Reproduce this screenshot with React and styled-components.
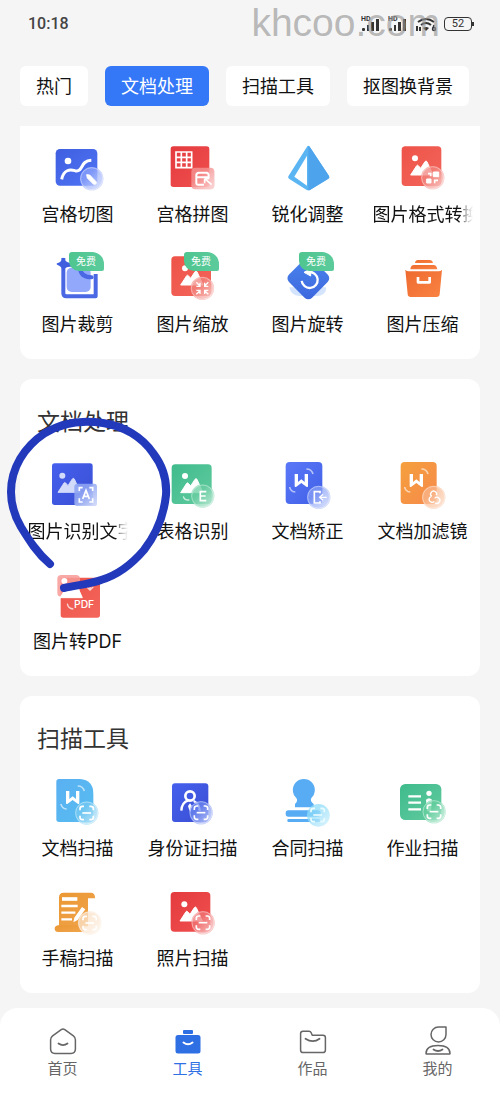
import React, { useState } from "react";
import styled, { createGlobalStyle } from "styled-components";

const GlobalStyle = createGlobalStyle`
  * {
    box-sizing: border-box;
  }
  body {
    margin: 0;
    background: #f5f5f5;
    font-family: Inter, "Noto Sans CJK SC", sans-serif;
    color: #111;
  }
  button {
    margin: 0;
    padding: 0;
    border: none;
    background: none;
    font: inherit;
    color: inherit;
    cursor: pointer;
  }
`;

const gradients = [
  ["blue", "#3f5fdf", "#4f74f6"],
  ["royal", "#4560ee", "#3a4ed2"],
  ["indigo", "#5b78f8", "#3f5fe6"],
  ["diamond", "#4a86ee", "#3d66dd"],
  ["red", "#e43a3e", "#f0504f"],
  ["coral", "#ee5348", "#f3665c"],
  ["sky", "#5ab0f2", "#57bdf0"],
  ["green", "#3fbb8c", "#62cb9f"],
  ["orange", "#f5a03c", "#f68a4c"],
  ["box", "#ee6a2e", "#f98343"],
  ["sepia", "#eb9733", "#f0a54c"],
];

function Gradients() {
  return (
    <HiddenSvg aria-hidden="true">
      <defs>
        {gradients.map(([id, from, to]) => (
          <linearGradient key={id} id={id} x1="0" y1="0" x2="1" y2="1">
            <stop offset="0" stopColor={from} />
            <stop offset="1" stopColor={to} />
          </linearGradient>
        ))}
        <linearGradient id="shine" x1="0" y1="0" x2="1" y2="1">
          <stop offset="0.35" stopColor="#fff" stopOpacity="0" />
          <stop offset="1" stopColor="#fff" stopOpacity="0.6" />
        </linearGradient>
      </defs>
    </HiddenSvg>
  );
}

function Photo({ x = 0, y = 0, color = "#fff" }) {
  return (
    <g transform={`translate(${x} ${y})`} fill={color}>
      <circle cx="16" cy="0" r="9" />
      <path
        d="M3 50 21 22q2-3 5 0l7 8 13-20q3-4 6 0l18 40z"
        stroke={color}
        strokeWidth="3"
        strokeLinejoin="round"
      />
    </g>
  );
}

function Lens({ cx, cy, color, children }) {
  return (
    <g>
      <circle cx={cx} cy={cy} r="35" fill={color} fillOpacity="0.75" />
      <circle cx={cx} cy={cy} r="35" fill="url(#shine)" />
      <circle cx={cx} cy={cy} r="33" fill="none" stroke="#fff" strokeOpacity="0.4" strokeWidth="3" />
      <g transform={`translate(${cx} ${cy})`} fill="none" stroke="#fff" strokeWidth="5">
        {children}
      </g>
    </g>
  );
}

function ScanMark() {
  return (
    <>
      <path d="M-20-8v-5q0-7 7-7h5M8-20h5q7 0 7 7v5M20 8v5q0 7-7 7H8M-8 20h-5q-7 0-7-7V8" />
      <path d="M-13 0h26" />
    </>
  );
}

function LetterMark({ x, y }) {
  return (
    <g transform={`translate(${x} ${y})`} fill="none" stroke="#fff">
      <path
        d="M-20-18h10V6L0-2 10 6v-24h10v36q0 5-5 2L0 9-15 20q-5 3-5-2z"
        fill="#fff"
        stroke="none"
      />
      <path d="M15-33q16 0 20 15" strokeWidth="5" opacity="0.6" />
      <path d="M-35 21q2 14 17 15" strokeWidth="5" opacity="0.6" />
    </g>
  );
}

const icons = {
  slice: (
    <>
      <rect x="5" y="15" width="125" height="110" rx="13" fill="url(#blue)" />
      <circle cx="42" cy="51" r="10" fill="#fff" />
      <path d="M23 106C29 76 48 76 63 80c26 6 14-30 49-31" fill="none" stroke="#fff" strokeWidth="9" />
      <Lens cx={113} cy={104} color="#8fa6fb">
        <path d="M-15-12-6-11 14 10 13 16 6 17-13-2z" fill="#fff" strokeWidth="3" strokeLinejoin="round" />
      </Lens>
    </>
  ),
  collage: (
    <>
      <rect x="5" y="7" width="116" height="122" rx="8" fill="url(#red)" />
      <path d="M21 24h47v47H21zM37 24v47M53 24v47M21 40h47M21 55h47" fill="none" stroke="#fff" strokeWidth="5" />
      <rect x="67" y="71" width="69" height="65" rx="12" fill="#f58f8f" fillOpacity="0.85" />
      <rect x="67" y="71" width="69" height="65" rx="12" fill="url(#shine)" />
      <path d="M82 100v-6q0-8 8-8h21q8 0 8 8v6zM82 98v20q0 4 4 4h19" fill="none" stroke="#fff" strokeWidth="6" />
      <path d="M107 104 128 122M107 104v14M107 104h14" fill="none" stroke="#fff" strokeWidth="5" />
    </>
  ),
  prism: (
    <>
      <path d="M69 8q4-5 8 0l58 88q3 5-2 8l-54 33q-6 4-12 0l-52-33q-4-3-2-7z" fill="#5cb5f3" />
      <path d="M73 6q3 0 4 2l58 88q3 5-2 8l-54 33q-3 2-6 2z" fill="#4da4ec" />
      <path d="M69 35v90L31 98z" fill="#fff" />
    </>
  ),
  convert: (
    <>
      <rect x="8" y="7" width="119" height="119" rx="11" fill="url(#coral)" />
      <Photo x={32} y={43} />
      <Lens cx={101} cy={101} color="#f2847e">
        <path d="M2-17h16V-3H2zM-18 4h13v12h-13z" fill="#fff" strokeWidth="3" />
        <path d="M-14-12h8v8M6 17V8h10" strokeWidth="5" />
      </Lens>
    </>
  ),
  crop: (
    <>
      <rect x="38" y="41" width="72" height="73" rx="15" fill="#92a8fb" />
      <path d="M28 12v106q0 9 9 9h88V60" fill="none" stroke="#4a68e4" strokeWidth="12" strokeLinejoin="round" />
      <path d="M78 42q2 28 35 28" fill="none" stroke="#4a68e4" strokeWidth="12" strokeLinecap="round" />
      <path
        d="M28 12q3 15 20 17h28v7H48Q31 37 28 48 25 35 10 30 25 26 28 12"
        fill="#3f5fdf"
        stroke="#3f5fdf"
        strokeWidth="4"
        strokeLinejoin="round"
      />
    </>
  ),
  scale: (
    <>
      <rect x="7" y="7" width="119" height="119" rx="11" fill="url(#coral)" />
      <Photo x={32} y={43} />
      <Lens cx={100} cy={103} color="#f2847e">
        <path
          d="M-18-18-7-7M-7-17v11h-11M18-18 7-7M7-17v11h11M-18 18-7 7M-7 17V6h-11M18 18 7 7M7 17V6h11"
          strokeWidth="4"
        />
      </Lens>
    </>
  ),
  rotate: (
    <>
      <path d="M16 100h110q2 12-8 20-8 6-18 6H46q-26-2-30-26" fill="#d3e4fc" />
      <rect x="24" y="24" width="98" height="98" rx="16" fill="url(#diamond)" transform="rotate(45 73 73)" />
      <path d="M53 78a24 24 0 1 0 24-24" fill="none" stroke="#fff" strokeWidth="7" transform="rotate(-6 77 78)" />
      <path d="M60 55 80 44v22z" fill="#fff" stroke="#fff" strokeWidth="3" strokeLinejoin="round" />
    </>
  ),
  compress: (
    <>
      <path d="M48 27q1-9 9-9h35q8 0 10 9z" fill="url(#box)" />
      <path d="M34 46q1-13 11-13h58q10 0 12 13z" fill="url(#box)" />
      <path d="M19 47q4 5 10 5h90q6 0 10-5l-7 74q-1 8-9 8H35q-8 0-9-8z" fill="url(#box)" />
      <path d="M57 69v16h35V69" fill="none" stroke="#fff" strokeWidth="8" strokeLinejoin="round" />
    </>
  ),
  ocr: (
    <>
      <rect x="-6" y="7" width="122" height="125" rx="8" fill="url(#royal)" />
      <Photo x={9} y={44} color="#d3dbfa" />
      <rect x="61" y="68" width="68" height="67" rx="9" fill="#8ea4f2" fillOpacity="0.9" />
      <rect x="61" y="68" width="68" height="67" rx="9" fill="url(#shine)" />
      <path d="M76 90V80h10M106 80h10v10M116 112v11h-10M86 123H76v-11" fill="none" stroke="#fff" strokeWidth="5" />
      <path d="m86 114 10-26 10 26M89 106h14" fill="none" stroke="#fff" strokeWidth="5" />
    </>
  ),
  table: (
    <>
      <rect x="8" y="10" width="120" height="119" rx="11" fill="url(#green)" />
      <Photo x={32} y={45} />
      <path d="M43 106q2 12 18 11" fill="none" stroke="#fff" strokeWidth="4" opacity="0.7" />
      <Lens cx={101} cy={105} color="#6acda2">
        <path d="M11-13H-7v27h18M-7 0h16" />
      </Lens>
    </>
  ),
  correct: (
    <>
      <rect x="5" y="3" width="110" height="126" rx="12" fill="url(#indigo)" />
      <LetterMark x={52} y={57} />
      <Lens cx={104} cy={109} color="#8aa2f7">
        <path d="M4-12v-5h-17v34H4v-5" />
        <path d="M24 0H3M13-9 3 0l10 9" strokeWidth="4" />
      </Lens>
    </>
  ),
  filter: (
    <>
      <rect x="5" y="3" width="108" height="126" rx="12" fill="url(#orange)" />
      <LetterMark x={52} y={57} />
      <Lens cx={104} cy={109} color="#f9b78b">
        <path d="M-6-3a9 9 0 1 1 14-3M2 12a9 9 0 1 1-8-15M3 3a9 9 0 1 1 1 13" strokeWidth="4" />
      </Lens>
    </>
  ),
  pdf: (
    <>
      <rect x="20" y="20" width="118" height="120" rx="8" fill="url(#coral)" />
      <rect x="10" y="12" width="68" height="65" rx="12" fill="#f79a96" fillOpacity="0.85" />
      <Photo x={15} y={30} />
      <path d="M108 36v20M98 47l10 10 10-10M40 98q2 15 18 16" fill="none" stroke="#fff" strokeWidth="4" opacity="0.75" />
      <text x="60" y="110" fill="#fff" fontSize="31" fontWeight="500" fontFamily="Inter, sans-serif">PDF</text>
    </>
  ),
  docScan: (
    <>
      <path d="M15 3h63q40 3 40 44v77q0 8-8 8H15q-8 0-8-8V11q0-8 8-8" fill="url(#sky)" />
      <LetterMark x={56} y={57} />
      <Lens cx={98} cy={105} color="#76caf2">
        <ScanMark />
      </Lens>
    </>
  ),
  idScan: (
    <>
      <rect x="9" y="16" width="109" height="116" rx="9" fill="url(#royal)" />
      <circle cx="63" cy="54" r="14" fill="none" stroke="#fff" strokeWidth="8" />
      <path d="M37 98q1-25 21-31M92 98q0-20-18-29" fill="none" stroke="#fff" strokeWidth="7" />
      <path d="m63 76 6 8-6 19-6-19z" fill="#fff" />
      <Lens cx={96} cy={104} color="#6f88f0">
        <ScanMark />
      </Lens>
    </>
  ),
  stamp: (
    <>
      <path d="M33 88V78q10-9 4-18a33 33 0 1 1 45 0q-5 9 7 18v10z" fill="#58acf4" />
      <rect x="5" y="97" width="105" height="19" rx="8" fill="#58acf4" />
      <rect x="10" y="123" width="98" height="9" rx="4" fill="#58acf4" />
      <circle cx="103" cy="112" r="34" fill="#8fdcf9" fillOpacity="0.75" />
      <circle cx="103" cy="112" r="34" fill="url(#shine)" />
      <g transform="translate(101 111)" fill="none" stroke="#e9fbff" strokeWidth="5">
        <ScanMark />
      </g>
    </>
  ),
  homework: (
    <>
      <rect x="3" y="18" width="124" height="108" rx="16" fill="url(#green)" />
      <path d="M28 55h38M28 74h38M28 94h38" stroke="#fff" strokeWidth="7" />
      <circle cx="90" cy="46" r="8" fill="#fff" />
      <path d="M81 65q9-9 18 0l-3 35H84z" fill="#fff" />
      <Lens cx={105} cy={101} color="#66cf9f">
        <ScanMark />
      </Lens>
    </>
  ),
  manuscript: (
    <>
      <path d="M29 14h83q12 2 11 17h-21v84H15V29q0-15 14-15" fill="url(#sepia)" />
      <path d="M12 112h78v20H12q-10-2-10-10t10-10" fill="url(#sepia)" />
      <path d="M24 33h46" stroke="#fff" strokeWidth="11" />
      <path d="M22 54h49M22 74h42M22 94h32" stroke="#fff" strokeWidth="7" />
      <path d="M58 103 61 89 84 57l10 7-23 32z" fill="#fff" />
      <Lens cx={107} cy={105} color="#fbe3cb">
        <ScanMark />
      </Lens>
    </>
  ),
  photoScan: (
    <>
      <rect x="5" y="12" width="119" height="119" rx="11" fill="url(#red)" />
      <Photo x={30} y={49} />
      <Lens cx={102} cy={104} color="#f07878">
        <ScanMark />
      </Lens>
    </>
  ),
};

const tabs = ["热门", "文档处理", "扫描工具", "抠图换背景"];

const sections = [
  {
    id: "image",
    tools: [
      { name: "宫格切图", icon: "slice" },
      { name: "宫格拼图", icon: "collage" },
      { name: "锐化调整", icon: "prism" },
      { name: "图片格式转换", icon: "convert", long: true },
      { name: "图片裁剪", icon: "crop", free: true },
      { name: "图片缩放", icon: "scale", free: true },
      { name: "图片旋转", icon: "rotate", free: true },
      { name: "图片压缩", icon: "compress" },
    ],
  },
  {
    id: "document",
    title: "文档处理",
    circled: true,
    tools: [
      { name: "图片识别文字", icon: "ocr", long: true },
      { name: "表格识别", icon: "table" },
      { name: "文档矫正", icon: "correct" },
      { name: "文档加滤镜", icon: "filter" },
      { name: "图片转PDF", icon: "pdf" },
    ],
  },
  {
    id: "scan",
    title: "扫描工具",
    tools: [
      { name: "文档扫描", icon: "docScan" },
      { name: "身份证扫描", icon: "idScan" },
      { name: "合同扫描", icon: "stamp" },
      { name: "作业扫描", icon: "homework" },
      { name: "手稿扫描", icon: "manuscript" },
      { name: "照片扫描", icon: "photoScan" },
    ],
  },
];

const navItems = [
  {
    name: "首页",
    icon: (
      <>
        <path d="M12.2 2.6q1.8-1.3 3.6 0l8.6 6.2q2 1.5 2 4V22q0 4.400-4.400 4.400H6Q1.600 26.400 1.600 22v-9.200q0-2.500 2-4z" />
        <path d="M9.500 16.500q4.500 3.200 9 0" strokeWidth="1.800" />
      </>
    ),
  },
  {
    name: "工具",
    icon: (
      <>
        <rect x="9" y="3" width="10" height="4" rx="1" fill="currentColor" stroke="none" />
        <rect x="1.500" y="8" width="25" height="18.500" rx="2.500" fill="currentColor" stroke="none" />
        <path d="M9.500 15.500q4.500 3.500 9 0" stroke="#fff" strokeWidth="2" />
      </>
    ),
  },
  {
    name: "作品",
    icon: (
      <>
        <path d="M4 4.200h6q1.500 0 2.200 1.600l1 2.400H24q2.400 0 2.400 2.400V23q0 2.600-2.600 2.600H4.200q-2.600 0-2.600-2.600V6.600Q1.600 4.200 4 4.200z" />
        <path d="M6.500 11.800q7.500 4.800 14 0" strokeWidth="1.800" />
      </>
    ),
  },
  {
    name: "我的",
    icon: (
      <>
        <path d="M22 0v7.500a7.500 7.500 0 1 1-7.500-7.500z" />
        <path d="M2 26.500q0-8 12-8t12 8q0 .5-.5.5h-23q-.5 0-.5-.500z" />
        <path d="M9.500 22.500q4.500 3 9 0" strokeWidth="1.800" />
      </>
    ),
  },
];

function SignalIcon() {
  return (
    <svg width="20" height="18" viewBox="0 0 20 18" fill="#333" aria-hidden="true">
      <text x="0" y="6" fontSize="7" fontWeight="700" fontFamily="Roboto, sans-serif">HD</text>
      <rect x="1" y="13" width="3" height="3" rx="1" />
      <rect x="6" y="10" width="2" height="6" />
      <rect x="10" y="7" width="3" height="9" />
      <rect x="15" y="4" width="3" height="12" />
    </svg>
  );
}

function WifiIcon() {
  return (
    <svg width="22" height="18" viewBox="0 0 22 18" fill="none" stroke="#333" strokeWidth="2" aria-hidden="true">
      <path d="M3 7q8-6 16 0M6 10q5-4 10 0" />
      <path d="m8 13 3 3 3-3q-3-2-6 0" fill="#333" stroke="none" />
      <path d="M2 11v5M5 12v4" />
      <circle cx="19" cy="14" r="1.500" strokeWidth="1.500" />
      <path d="m18 13 1-3" strokeWidth="1.500" />
    </svg>
  );
}

function Tool({ name, icon, free, long }) {
  return (
    <ToolButton type="button">
      <IconBox>
        <svg width="48" height="48" viewBox="0 0 144 144" overflow="visible" aria-hidden="true">
          {icons[icon]}
        </svg>
        {free && <FreeBadge>免费</FreeBadge>}
      </IconBox>
      <ToolName $faded={long}>{name}</ToolName>
    </ToolButton>
  );
}

export default function App() {
  const [activeTab, setActiveTab] = useState("文档处理");
  const [activeNav, setActiveNav] = useState("工具");

  return (
    <Page>
      <GlobalStyle />
      <Gradients />
      <StatusBar>
        <Clock>10:18</Clock>
        <StatusIcons>
          <SignalIcon />
          <SignalIcon />
          <WifiIcon />
          <Battery>52</Battery>
        </StatusIcons>
        <Watermark>khcoo.com</Watermark>
      </StatusBar>
      <Tabs>
        {tabs.map((tab) => (
          <Tab key={tab} type="button" $active={tab === activeTab} onClick={() => setActiveTab(tab)}>
            {tab}
          </Tab>
        ))}
      </Tabs>
      <Content>
        {sections.map((section) => (
          <Card key={section.id} $open={!section.title}>
            {section.title && <CardTitle>{section.title}</CardTitle>}
            <ToolGrid>
              {section.tools.map((tool) => (
                <Tool key={tool.name} {...tool} />
              ))}
            </ToolGrid>
            {section.circled && (
              <Marker width="180" height="190" viewBox="0 410 180 190" aria-hidden="true">
                <path d="M50 564C37 553 29 540 21 527 14 515 11 505 11 492 11 468 24 447 45 433 63 422 84 420 103 423 124 426 142 437 153 453 163 466 167 480 166 495 164 514 158 532 144 550 132 564 118 575 101 580 90 584 78 585 64 588" />
              </Marker>
            )}
          </Card>
        ))}
      </Content>
      <NavBar>
        {navItems.map((item) => (
          <NavButton
            key={item.name}
            type="button"
            $active={item.name === activeNav}
            onClick={() => setActiveNav(item.name)}
          >
            <svg width="28" height="28" viewBox="0 0 28 28" overflow="visible" aria-hidden="true">
              {item.icon}
            </svg>
            {item.name}
          </NavButton>
        ))}
      </NavBar>
    </Page>
  );
}

const HiddenSvg = styled.svg`
  position: absolute;
  width: 0;
  height: 0;
`;

const Page = styled.div`
  display: flex;
  flex-direction: column;
  min-height: 100vh;
  overflow-x: hidden;
`;

const StatusBar = styled.header`
  position: relative;
  display: flex;
  align-items: center;
  justify-content: space-between;
  height: 48px;
  padding: 0 28px;
`;

const Clock = styled.time`
  font-family: Roboto, sans-serif;
  font-size: 16px;
  font-weight: 500;
  line-height: 24px;
  color: #444;
`;

const StatusIcons = styled.div`
  display: flex;
  align-items: center;
  gap: 7px;
`;

const Battery = styled.span`
  position: relative;
  width: 28px;
  height: 14px;
  border: 1px solid #333;
  border-radius: 4px;
  font-family: Roboto, sans-serif;
  font-size: 11px;
  line-height: 12px;
  text-align: center;
  color: #333;
  &::after {
    content: "";
    position: absolute;
    top: 4px;
    right: -3px;
    width: 2px;
    height: 4px;
    background: #333;
  }
`;

const Watermark = styled.span`
  position: absolute;
  top: 1px;
  right: 60px;
  font-family: "Liberation Sans", sans-serif;
  font-size: 39px;
  line-height: 44px;
  color: rgba(150, 150, 150, 0.65);
  pointer-events: none;
`;

const Tabs = styled.nav`
  display: flex;
  gap: 17px;
  padding: 18px 0 20px 20px;
`;

const Tab = styled.button`
  && {
    flex: none;
    height: 40px;
    padding: 0 16px 2px;
    border-radius: 6px;
    font-size: 18px;
    background: ${({ $active }) => ($active ? "#3478f8" : "#fff")};
    color: ${({ $active }) => ($active ? "#fff" : "#111")};
  }
`;

const Content = styled.main`
  display: flex;
  flex-direction: column;
  gap: 20px;
  padding: 0 20px 14px;
`;

const Card = styled.section`
  position: relative;
  padding: ${({ $open }) => ($open ? "18px" : "26px")} 0 22px;
  border-radius: ${({ $open }) => ($open ? "0 0 12px 12px" : "12px")};
  background: #fff;
`;

const CardTitle = styled.h2`
  margin: 0;
  padding: 1px 0 23px 17px;
  font-size: 23px;
  font-weight: 400;
  line-height: 32px;
  color: #333;
`;

const ToolGrid = styled.div`
  display: grid;
  grid-template-columns: repeat(4, minmax(0, 1fr));
  row-gap: 27px;
`;

const ToolButton = styled.button`
  && {
    display: flex;
    flex-direction: column;
    align-items: center;
    gap: 11px;
    min-width: 0;
  }
`;

const IconBox = styled.span`
  position: relative;
  width: 48px;
  height: 48px;
  svg {
    display: block;
  }
`;

const FreeBadge = styled.span`
  position: absolute;
  top: -2px;
  left: 15px;
  width: 35px;
  height: 19px;
  border-radius: 3px 12px 2px 10px;
  background: linear-gradient(90deg, #4fc58f, #5ccb9c);
  font-size: 10px;
  line-height: 19px;
  text-align: center;
  color: #fff;
`;

const ToolName = styled.span`
  max-width: 100px;
  overflow: hidden;
  font-size: 18px;
  line-height: 24px;
  white-space: nowrap;
  mask-image: ${({ $faded }) =>
    $faded ? "linear-gradient(90deg, #000 88%, rgba(0, 0, 0, 0.4) 92%, transparent)" : "none"};
`;

const Marker = styled.svg`
  position: absolute;
  top: 31px;
  left: -20px;
  pointer-events: none;
  path {
    fill: none;
    stroke: #2339bb;
    stroke-width: 8;
    stroke-linecap: round;
    stroke-linejoin: round;
  }
`;

const NavBar = styled.nav`
  display: grid;
  grid-template-columns: repeat(4, 1fr);
  margin-top: auto;
  padding: 19px 0;
  border-radius: 18px 18px 0 0;
  background: #fff;
`;

const NavButton = styled.button`
  && {
    display: flex;
    flex-direction: column;
    align-items: center;
    gap: 4px;
    font-size: 15px;
    line-height: 20px;
    color: ${({ $active }) => ($active ? "#2f6fe4" : "#666")};
  }
  svg {
    fill: none;
    stroke: currentColor;
    stroke-width: 1.5px;
    stroke-linecap: round;
    stroke-linejoin: round;
  }
`;
